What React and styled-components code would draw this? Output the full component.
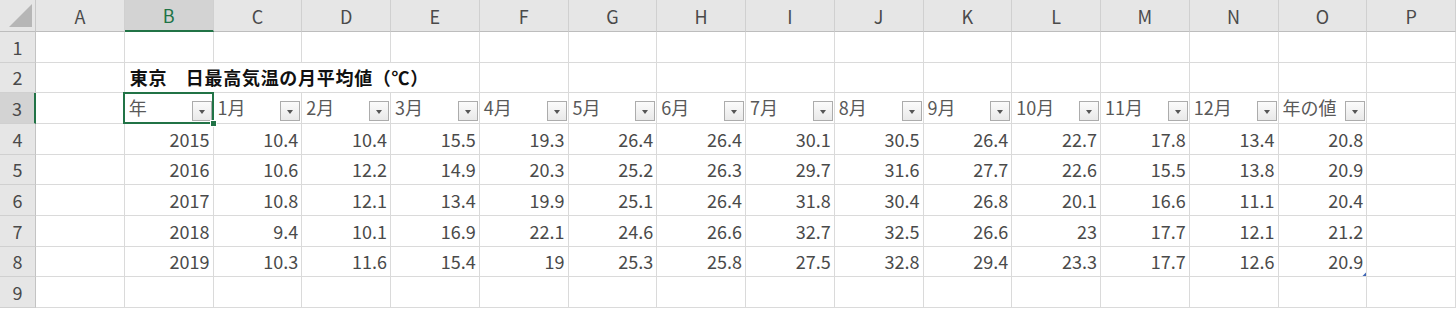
import React from 'react';
import styled, { createGlobalStyle, css } from 'styled-components';

const GlobalStyle = createGlobalStyle`
  html, body {
    margin: 0;
    padding: 0;
    background: #ffffff;
  }
  body {
    font-family: 'Noto Sans CJK JP', 'Noto Sans', sans-serif;
  }
`;

const GREEN = '#217346';

const Sheet = styled.div`
  display: grid;
  grid-template-columns: 36px repeat(16, 1fr);
  grid-template-rows: 32px repeat(9, 1fr);
  width: 1456px;
  height: 308px;
  font-family: 'Noto Sans CJK JP', 'Noto Sans', sans-serif;
  font-size: 18px;
  color: #4a4a4a;
  overflow: hidden;
`;

const Corner = styled.div`
  position: relative;
  background: #e6e6e6;
  border-right: 1px solid #c8c8c8;
  border-bottom: 1px solid #bdbdbd;
  box-sizing: border-box;

  &::after {
    content: '';
    position: absolute;
    right: 3px;
    bottom: 4px;
    width: 23px;
    height: 23px;
    background: #b6b6b6;
    clip-path: polygon(100% 0, 100% 100%, 0 100%);
  }
`;

const ColHead = styled.div`
  display: flex;
  align-items: center;
  justify-content: center;
  box-sizing: border-box;
  background: ${(p) => (p.$active ? '#d3d3d3' : '#e6e6e6')};
  border-right: 1px solid #d0d0d0;
  border-bottom: ${(p) => (p.$active ? `2px solid ${GREEN}` : '1px solid #bdbdbd')};
  color: ${(p) => (p.$active ? GREEN : '#4a4a4a')};
  font-size: 18px;
  line-height: 1;
`;

const RowHead = styled.div`
  display: flex;
  align-items: center;
  justify-content: center;
  box-sizing: border-box;
  background: ${(p) => (p.$active ? '#d3d3d3' : '#e6e6e6')};
  border-right: ${(p) => (p.$active ? `2px solid ${GREEN}` : '1px solid #c3c3c3')};
  border-bottom: 1px solid #d0d0d0;
  color: #4a4a4a;
  font-size: 18px;
  line-height: 1;
`;

const Cell = styled.div`
  position: relative;
  display: flex;
  align-items: center;
  justify-content: ${(p) => (p.$align === 'right' ? 'flex-end' : 'flex-start')};
  box-sizing: border-box;
  min-width: 0;
  padding: 0 3px 0 4px;
  border-right: 1px solid #dadada;
  border-bottom: 1px solid #dadada;
  white-space: nowrap;
  line-height: 1;
  ${(p) => p.$span && css`grid-column: span ${p.$span};`}
  ${(p) =>
    p.$bold &&
    css`
      font-weight: 700;
      color: #111;
      padding-left: 5px;
      letter-spacing: 0.7px;
    `}
  ${(p) =>
    p.$tableEnd &&
    css`
      &::after {
        content: '';
        position: absolute;
        right: 0;
        bottom: 0;
        width: 4px;
        height: 4px;
        background: #3c64b4;
        clip-path: polygon(100% 0, 100% 100%, 0 100%);
      }
    `}
`;

const FilterCell = styled.div`
  position: relative;
  display: flex;
  align-items: center;
  justify-content: space-between;
  box-sizing: border-box;
  min-width: 0;
  padding: 0 1px 0 4px;
  border-right: 1px solid #dadada;
  border-bottom: 1px solid #dadada;
  white-space: nowrap;
  line-height: 1;
  color: #595959;

  ${(p) =>
    p.$selected &&
    css`
      &::before {
        content: '';
        position: absolute;
        top: -1px;
        left: -2px;
        right: -1px;
        bottom: -1px;
        border: 2px solid ${GREEN};
        pointer-events: none;
        z-index: 1;
      }
    `}
`;

const Label = styled.span`
  margin-top: -3px;
`;

const DropButton = styled.span`
  align-self: flex-end;
  margin-bottom: 2px;
  position: relative;
  width: 20px;
  height: 20px;
  flex: none;
  box-sizing: border-box;
  border: 1px solid #acacac;
  background: linear-gradient(#fbfbfb, #e9e9e9);

  &::after {
    content: '';
    position: absolute;
    left: 50%;
    top: 50%;
    margin-left: -3px;
    margin-top: -1px;
    border-left: 3.5px solid transparent;
    border-right: 3.5px solid transparent;
    border-top: 4px solid #555;
  }
`;

const FillHandle = styled.span`
  position: absolute;
  right: -4px;
  bottom: -4px;
  width: 5px;
  height: 5px;
  background: ${GREEN};
  border: 1px solid #fff;
  z-index: 2;
`;

const letters = 'ABCDEFGHIJKLMNOP'.split('');
const headers = ['年', '1月', '2月', '3月', '4月', '5月', '6月', '7月', '8月', '9月', '10月', '11月', '12月', '年の値'];

const data = [
  [2015, 10.4, 10.4, 15.5, 19.3, 26.4, 26.4, 30.1, 30.5, 26.4, 22.7, 17.8, 13.4, 20.8],
  [2016, 10.6, 12.2, 14.9, 20.3, 25.2, 26.3, 29.7, 31.6, 27.7, 22.6, 15.5, 13.8, 20.9],
  [2017, 10.8, 12.1, 13.4, 19.9, 25.1, 26.4, 31.8, 30.4, 26.8, 20.1, 16.6, 11.1, 20.4],
  [2018, 9.4, 10.1, 16.9, 22.1, 24.6, 26.6, 32.7, 32.5, 26.6, 23, 17.7, 12.1, 21.2],
  [2019, 10.3, 11.6, 15.4, 19, 25.3, 25.8, 27.5, 32.8, 29.4, 23.3, 17.7, 12.6, 20.9],
];

const Blank = ({ n }) => Array.from({ length: n }, (_, i) => <Cell key={i} />);

const App = () => (
  <>
    <GlobalStyle />
    <Sheet>
      <Corner />
      {letters.map((l) => (
        <ColHead key={l} $active={l === 'B'}>{l}</ColHead>
      ))}

      <RowHead>1</RowHead>
      <Blank n={16} />

      <RowHead>2</RowHead>
      <Cell />
      <Cell $bold $span={4}>東京　日最高気温の月平均値（℃）</Cell>
      <Blank n={11} />

      <RowHead $active>3</RowHead>
      <Cell />
      {headers.map((h, i) => (
        <FilterCell key={h} $selected={i === 0}>
          <Label>{h}</Label>
          <DropButton />
          {i === 0 && <FillHandle />}
        </FilterCell>
      ))}
      <Cell />

      {data.map((row, r) => (
        <React.Fragment key={row[0]}>
          <RowHead>{r + 4}</RowHead>
          <Cell />
          {row.map((v, c) => (
            <Cell
              key={c}
              $align="right"
              $tableEnd={r === data.length - 1 && c === row.length - 1}
            >
              {v}
            </Cell>
          ))}
          <Cell />
        </React.Fragment>
      ))}

      <RowHead>9</RowHead>
      <Blank n={16} />
    </Sheet>
  </>
);

export default App;
